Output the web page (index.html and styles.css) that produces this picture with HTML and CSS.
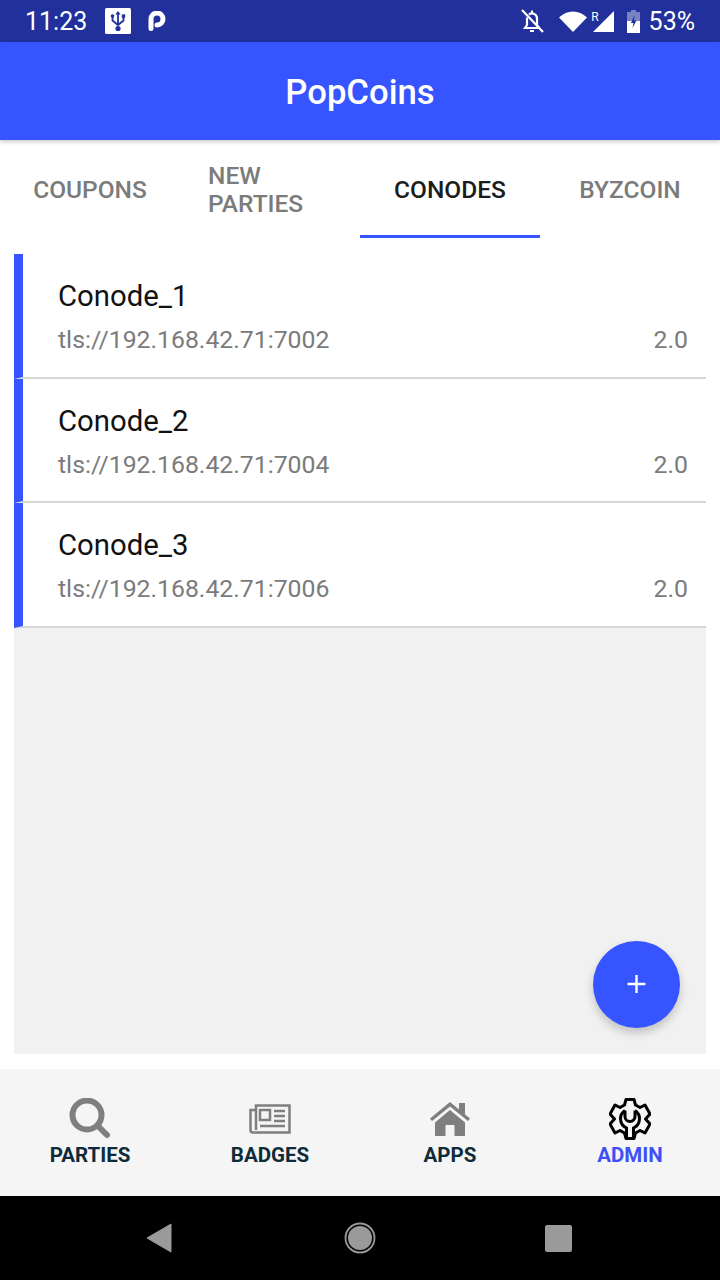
FILE: index.html
```html
<!DOCTYPE html>
<html lang="en">
<head>
  <meta charset="UTF-8" />
  <title>PopCoins</title>
  <link rel="stylesheet" href="styles.css">
</head>
<body>
  <div class="screen">

    <div class="status-bar">
      <div class="status-left">
        <span class="status-time">11:23</span>
        <svg class="usb-icon" width="26" height="26" viewBox="0 0 26 26">
          <rect width="26" height="26" rx="1.5" fill="#fff"/>
          <path d="M13 3l2.600 3.600h-1.700V17h-1.800V6.600h-1.700z" fill="#21309a"/>
          <path d="M7.500 8v4.500l5.500 4.500 5.500-4.500V8" fill="none" stroke="#21309a" stroke-width="1.800"/>
          <circle cx="7.500" cy="8" r="1.800" fill="#21309a"/>
          <rect x="16.800" y="6.400" width="3.400" height="3.400" fill="#21309a"/>
          <circle cx="13" cy="20.500" r="2.600" fill="#21309a"/>
        </svg>
        <svg class="p-icon" width="18" height="20" viewBox="0 0 18 20">
          <path d="M3 17.500V8a6 6 0 1 1 6 6" fill="none" stroke="#fff" stroke-width="5" stroke-linecap="round"/>
        </svg>
      </div>
      <div class="status-right">
        <svg width="24" height="26" viewBox="0 0 24 26" class="bell-icon">
          <path d="M9 6.500a5 5 0 0 1 8 4.500v6l2 3H5l2-3V9.500M10 23h4M11 3.500h2" fill="none" stroke="#fff" stroke-width="2.200"/>
          <path d="M2 2l21 22" stroke="#fff" stroke-width="2.200"/>
        </svg>
        <svg width="28" height="21" viewBox="0 0 28 21" class="wifi-icon">
          <path d="M0 6.500C8-1.500 20-1.500 28 6.500L14 21z" fill="#fff"/>
        </svg>
        <div class="signal">
          <span class="signal-r">R</span>
          <svg width="21" height="21" viewBox="0 0 21 21">
            <path d="M0 21L21 0v21z" fill="#fff"/>
          </svg>
        </div>
        <svg width="13" height="23" viewBox="0 0 13 23" class="battery-icon">
          <path d="M4 0h5v2h4v21H0V2h4z" fill="#fff" opacity=".4"/>
          <path d="M0 11h13v12H0z" fill="#fff"/>
          <path d="M7.500 5L4 13h2.500L5.500 18 9.500 10.500H7z" fill="#21309a"/>
        </svg>
        <span class="status-pct">53%</span>
      </div>
    </div>

    <header class="app-bar">PopCoins</header>

    <nav class="tabs">
      <div class="tab">COUPONS</div>
      <div class="tab tab-wrap">NEW PARTIES</div>
      <div class="tab active">CONODES</div>
      <div class="tab">BYZCOIN</div>
    </nav>

    <main class="content">
      <div class="list">
        <div class="conode">
          <div class="conode-name">Conode_1</div>
          <div class="conode-row"><span>tls://192.168.42.71:7002</span><span>2.0</span></div>
        </div>
        <div class="conode">
          <div class="conode-name">Conode_2</div>
          <div class="conode-row"><span>tls://192.168.42.71:7004</span><span>2.0</span></div>
        </div>
        <div class="conode">
          <div class="conode-name">Conode_3</div>
          <div class="conode-row"><span>tls://192.168.42.71:7006</span><span>2.0</span></div>
        </div>
      </div>
      <div class="fab">
        <svg width="20" height="20" viewBox="0 0 20 20">
          <path d="M9.500 0v18M.5 9h18" stroke="#fff" stroke-width="2.400"/>
        </svg>
      </div>
    </main>

    <footer class="bottom-nav">
      <div class="nav-item">
        <svg class="nav-icon" width="42" height="42" viewBox="0 0 42 42">
          <circle cx="18" cy="17" r="14.500" fill="none" stroke="#7f7f7f" stroke-width="6"/>
          <path d="M29 28l9 9" stroke="#7f7f7f" stroke-width="6" stroke-linecap="round"/>
        </svg>
        <span>PARTIES</span>
      </div>
      <div class="nav-item">
        <svg class="nav-icon" width="42" height="42" viewBox="0 0 42 42">
          <path d="M7 7.500h33.500v27H4A2.500 2.500 0 0 1 1.500 32V12H7zM7 12v20" fill="none" stroke="#7f7f7f" stroke-width="2.500"/>
          <path d="M11 12h10v10H11z" fill="none" stroke="#7f7f7f" stroke-width="2.500"/>
          <path d="M25 13h11M25 18h11M25 23h11M11 28h25" stroke="#7f7f7f" stroke-width="2.500"/>
        </svg>
        <span>BADGES</span>
      </div>
      <div class="nav-item">
        <svg class="nav-icon" width="42" height="42" viewBox="0 0 42 42">
          <path d="M1 20.500L21 4l9 7.500V5h6v11.500l5 4-2 2.500L21 8.500 3 23z" fill="#7f7f7f"/>
          <path d="M6 24.500L21 12l15 12.500V38H25.500V27h-9v11H6z" fill="#7f7f7f"/>
        </svg>
        <span>APPS</span>
      </div>
      <div class="nav-item nav-active">
        <svg class="nav-icon" width="42" height="42" viewBox="0 0 42 42">
          <path d="M17 1.500h8l1.500 5.500 4.500 2.500L36 7l5 9-4.500 5 4.500 5-5 9-5-2.500-4.500 2.500-1.500 5.500h-8L15.500 35 11 32.500 6 35l-5-9 4.500-5L1 16l5-9 5 2.500L15.500 7z" fill="none" stroke="#000" stroke-width="3" stroke-linejoin="round"/>
          <path d="M16 12.500a10 10 0 0 0 1.500 17.500V40M26 12.500A10 10 0 0 1 24.500 30V40M16 12.500v6a5 5 0 0 0 10 0v-6" fill="none" stroke="#000" stroke-width="3"/>
        </svg>
        <span>ADMIN</span>
      </div>
    </footer>

    <div class="system-nav">
      <svg width="26" height="30" viewBox="0 0 26 30">
        <path d="M25 1v28L1 15z" fill="#9a9a9a" stroke="#9a9a9a" stroke-width="1" stroke-linejoin="round"/>
      </svg>
      <svg class="home-btn" width="32" height="32" viewBox="0 0 32 32">
        <circle cx="16" cy="16" r="14.500" fill="none" stroke="#9a9a9a" stroke-width="1.800"/>
        <circle cx="16" cy="16" r="12" fill="#9a9a9a"/>
      </svg>
      <div class="recents"></div>
    </div>

  </div>
</body>
</html>
```

FILE: styles.css
```css
:root {
  --blue: #3654ff;
  --blue-dark: #21309a;
  --grey-text: #7b7b7b;
  --nav-text: #0d2b3a;
}

* {
  box-sizing: border-box;
  margin: 0;
  padding: 0;
}

body {
  font-family: Roboto, "Noto Sans", sans-serif;
  background: #fff;
}

.screen {
  width: 720px;
  height: 1280px;
  display: flex;
  flex-direction: column;
  overflow: hidden;
}

.status-bar {
  height: 42px;
  background: var(--blue-dark);
  color: #fff;
  display: flex;
  justify-content: space-between;
  align-items: center;
  padding: 0 25px;
}

.status-left,
.status-right {
  display: flex;
  align-items: center;
}

.status-time,
.status-pct {
  font-size: 25px;
}

.usb-icon {
  margin-left: 18px;
}

.p-icon {
  margin-left: 17px;
}

.wifi-icon {
  margin-left: 15px;
}

.signal {
  display: flex;
  align-items: flex-end;
  margin-left: 4px;
}

.signal-r {
  font-size: 12px;
  line-height: 12px;
  align-self: flex-start;
  margin-right: -6px;
}

.battery-icon {
  margin-left: 13px;
}

.status-pct {
  margin-left: 9px;
}

.app-bar {
  height: 98px;
  padding-top: 2px;
  background: var(--blue);
  color: #fff;
  font-size: 34.700px;
  font-weight: 500;
  display: flex;
  align-items: center;
  justify-content: center;
  box-shadow: 0 2px 4px rgba(0,0,0,0.2);
  position: relative;
}

.tabs {
  height: 98px;
  display: flex;
  background: #fff;
}

.tab {
  width: 180px;
  display: flex;
  align-items: center;
  justify-content: center;
  padding-top: 2px;
  font-size: 24.500px;
  font-weight: 500;
  line-height: 28px;
  color: var(--grey-text);
}

.tab-wrap {
  justify-content: flex-start;
  padding: 2px 28px 0;
}

.tab.active {
  color: #1c1c1c;
  box-shadow: inset 0 -3px 0 var(--blue);
}

.content {
  flex: 1;
  position: relative;
  margin: 16px 14px 15px;
  background: #f1f1f1;
}

.conode {
  height: 124.500px;
  background: #fff;
  border-left: 9px solid var(--blue);
  border-bottom: 2px solid #d6d6d6;
  padding: 24px 18px 0 35px;
}

.conode-name {
  font-size: 29.300px;
  line-height: 36px;
  color: #111;
}

.conode-row {
  display: flex;
  justify-content: space-between;
  font-size: 24.800px;
  line-height: 28px;
  margin-top: 12px;
  color: var(--grey-text);
}

.fab {
  position: absolute;
  right: 26px;
  bottom: 26px;
  width: 87px;
  height: 87px;
  border-radius: 50%;
  background: var(--blue);
  display: flex;
  align-items: center;
  justify-content: center;
  box-shadow: 0 5px 10px rgba(0,0,0,0.2);
}

.bottom-nav {
  height: 127px;
  background: #f5f5f5;
  display: flex;
}

.nav-item {
  width: 180px;
  height: 100%;
  display: flex;
  flex-direction: column;
  align-items: center;
  justify-content: flex-end;
  padding-bottom: 28px;
  font-size: 20.500px;
  font-weight: 700;
  line-height: 26px;
  color: var(--nav-text);
}

.nav-icon {
  margin-bottom: 2px;
}

.nav-active {
  color: #3d50f5;
}

.system-nav {
  height: 84px;
  background: #000;
  display: flex;
  align-items: center;
  padding-left: 146px;
}

.home-btn {
  margin-left: 172px;
}

.recents {
  width: 27px;
  height: 27px;
  border-radius: 2px;
  background: #9a9a9a;
  margin-left: 169px;
}
```
